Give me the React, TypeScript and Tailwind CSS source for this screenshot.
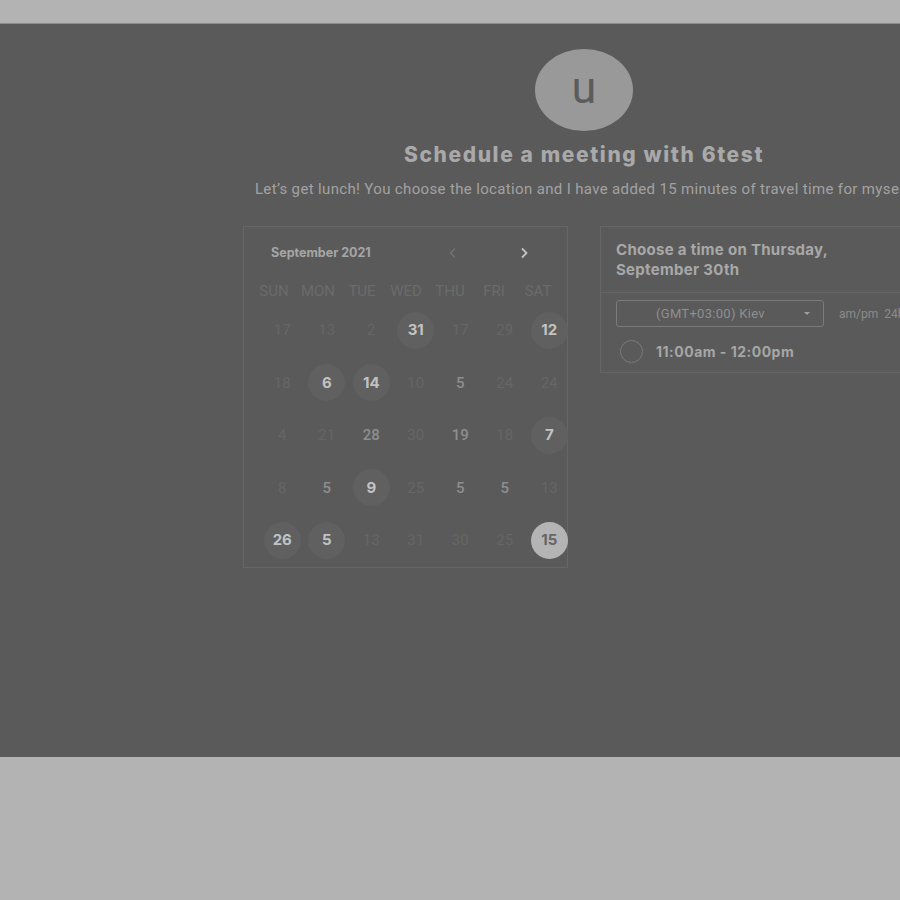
import React from "react"

type Day = { n: number; kind: "faint" | "mid" | "open" | "selected" }

const rows: Day[][] = [
  [
    { n: 17, kind: "faint" },
    { n: 13, kind: "faint" },
    { n: 2, kind: "faint" },
    { n: 31, kind: "open" },
    { n: 17, kind: "faint" },
    { n: 29, kind: "faint" },
    { n: 12, kind: "open" },
  ],
  [
    { n: 18, kind: "faint" },
    { n: 6, kind: "open" },
    { n: 14, kind: "open" },
    { n: 10, kind: "faint" },
    { n: 5, kind: "mid" },
    { n: 24, kind: "faint" },
    { n: 24, kind: "faint" },
  ],
  [
    { n: 4, kind: "faint" },
    { n: 21, kind: "faint" },
    { n: 28, kind: "mid" },
    { n: 30, kind: "faint" },
    { n: 19, kind: "mid" },
    { n: 18, kind: "faint" },
    { n: 7, kind: "open" },
  ],
  [
    { n: 8, kind: "faint" },
    { n: 5, kind: "mid" },
    { n: 9, kind: "open" },
    { n: 25, kind: "faint" },
    { n: 5, kind: "mid" },
    { n: 5, kind: "mid" },
    { n: 13, kind: "faint" },
  ],
  [
    { n: 26, kind: "open" },
    { n: 5, kind: "open" },
    { n: 13, kind: "faint" },
    { n: 31, kind: "faint" },
    { n: 30, kind: "faint" },
    { n: 25, kind: "faint" },
    { n: 15, kind: "selected" },
  ],
]

const weekdays = ["SUN", "MON", "TUE", "WED", "THU", "FRI", "SAT"]

function DayCell({ day }: { day: Day }) {
  if (day.kind === "open") {
    return (
      <div className="flex h-[37px] w-[37px] items-center justify-center rounded-full bg-[#606060] font-['Inter',sans-serif] text-[15px] font-bold text-[#c2c2c2]">
        {day.n}
      </div>
    )
  }
  if (day.kind === "selected") {
    return (
      <div className="flex h-[37px] w-[37px] items-center justify-center rounded-full bg-[#b4b4b4] font-['Inter',sans-serif] text-[15px] font-bold text-[#666666]">
        {day.n}
      </div>
    )
  }
  return (
    <span
      className={
        day.kind === "mid"
          ? "font-['Roboto',sans-serif] text-[15px] font-medium text-[#8e8e8e]"
          : "font-['Roboto',sans-serif] text-[15px] text-[#666666]"
      }
    >
      {day.n}
    </span>
  )
}

export default function App() {
  return (
    <div className="h-[900px] w-full overflow-hidden bg-[#b3b3b3]">
      <div className="mt-[23px] h-[734px] w-[900px] overflow-hidden border-t border-[#8c8c8c] bg-[#5a5a5a]">
        <div className="ml-[243px] w-[682px] pt-[25px]">
          <div className="flex flex-col items-center">
            <div className="flex h-[82px] w-[98px] items-center justify-center rounded-[50%] bg-[#999999]">
              <span className="-mt-[6px] font-['Roboto',sans-serif] text-[45px] leading-none text-[#5c5c5c]">u</span>
            </div>
            <h1 className="mt-[10px] font-['Inter',sans-serif] text-[21px] font-extrabold leading-[28px] tracking-[1.6px] text-[#a9a9a9]">
              Schedule a meeting with 6test
            </h1>
            <p className="mt-[10px] whitespace-nowrap font-['Roboto',sans-serif] text-[15px] leading-[20px] tracking-[0.35px] text-[#a2a2a2]">
              Let’s get lunch! You choose the location and I have added 15 minutes of travel time for myself.
            </p>
          </div>

          <div className="mt-[27px] flex items-start gap-[32px]">
            {/* calendar */}
            <div className="h-[342px] w-[325px] shrink-0 border border-[#666666]">
              <div className="mt-4 flex h-5 items-center">
                <span className="ml-[27px] w-[104px] font-['Inter',sans-serif] text-[12.5px] font-bold text-[#a6a6a6]">
                  September 2021
                </span>
                <svg className="ml-[74px]" width="8" height="12" viewBox="0 0 8 12">
                  <polyline points="6,1.5 1.5,6 6,10.5" fill="none" stroke="#717171" strokeWidth="1.6" />
                </svg>
                <svg className="ml-[63px]" width="8" height="12" viewBox="0 0 8 12">
                  <polyline points="2,1.5 6.5,6 2,10.5" fill="none" stroke="#c2c2c2" strokeWidth="1.8" />
                </svg>
              </div>
              <div className="mt-[17px] ml-[8px] grid h-5 grid-cols-[repeat(7,44px)] items-center">
                {weekdays.map((w) => (
                  <span key={w} className="text-center font-['Roboto',sans-serif] text-[15px] text-[#6b6b6b]">
                    {w}
                  </span>
                ))}
              </div>
              <div className="mt-[4px] ml-[16px]">
                {rows.map((row, i) => (
                  <div key={i} className="grid h-[52.5px] grid-cols-[repeat(7,44.5px)] items-center">
                    {row.map((d, j) => (
                      <div key={j} className="flex items-center justify-center">
                        <DayCell day={d} />
                      </div>
                    ))}
                  </div>
                ))}
              </div>
            </div>

            {/* times */}
            <div className="h-[147px] w-[325px] shrink-0 border border-[#666666]">
              <div className="border-b border-[#666666] px-[15px] pt-[13px] pb-[12px]">
                <p className="font-['Inter',sans-serif] text-[15px] font-bold leading-[20px] tracking-[0.3px] text-[#a8a8a8]">
                  Choose a time on Thursday,
                  <br />
                  September 30th
                </p>
              </div>
              <div className="flex items-center px-[15px] pt-[7px]">
                <div className="relative flex h-[27px] w-[208px] items-center rounded-[3px] border border-[#7a7a7a]">
                  <span className="ml-[39px] font-['Roboto',sans-serif] text-[13px] tracking-[0.3px] text-[#8f8f8f]">
                    (GMT+03:00) Kiev
                  </span>
                  <span className="absolute right-[13px] top-[11px] h-0 w-0 border-x-[3px] border-t-[3px] border-x-transparent border-t-[#a0a0a0]" />
                </div>
                <span className="ml-[15px] whitespace-nowrap font-['Roboto',sans-serif] text-[12px] text-[#8c8c8c]">
                  am/pm&nbsp;&nbsp;24h
                </span>
              </div>
              <div className="mt-[13px] flex items-center px-[19px]">
                <div className="h-[23px] w-[23px] rounded-full border-[1.5px] border-[#7a7a7a]" />
                <span className="ml-[13px] font-['Inter',sans-serif] text-[14px] font-bold tracking-[0.5px] text-[#a6a6a6]">
                  11:00am - 12:00pm
                </span>
              </div>
            </div>
          </div>
        </div>
      </div>
    </div>
  )
}
